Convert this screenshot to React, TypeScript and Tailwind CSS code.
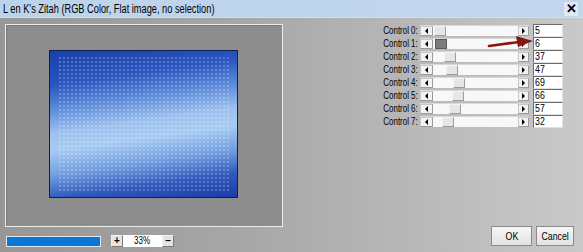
const controls = [5, 6, 37, 47, 69, 66, 57, 32];

function Slider({ value, active }: { value: number; active?: boolean }) {
  const left = Math.round((value / 255) * 73);
  return (
    <div className="flex h-[11px] w-[109px] border-t border-[#d8d8d8] bg-[#f6f6f6]">
      <div className="flex h-full w-[13px] items-center justify-center border border-[#c8c8c8] bg-[#f2f2f2] border-b-[#9a9a9a] border-r-[#9a9a9a]">
        <span className="h-0 w-0 border-y-[3px] border-r-[3px] border-y-transparent border-r-black" />
      </div>
      <div className="relative h-full flex-1 bg-[#f8f8f8]">
        <div
          className={
            active
              ? 'absolute top-0 h-full w-[12px] border border-[#5a5a5a] bg-[#7c7c7c]'
              : 'absolute top-0 h-full w-[12px] border border-[#f4f4f4] border-b-[#9c9c9c] border-r-[#9c9c9c] bg-[#e6e6e6]'
          }
          style={{ left }}
        />
      </div>
      <div className="flex h-full w-[11px] items-center justify-center border border-[#c8c8c8] bg-[#f2f2f2] border-b-[#9a9a9a] border-r-[#9a9a9a]">
        <span className="h-0 w-0 border-y-[3px] border-l-[3px] border-y-transparent border-l-black" />
      </div>
    </div>
  );
}

export default function App() {
  return (
    <div className="relative h-[252px] w-[583px] overflow-hidden bg-[linear-gradient(to_right,#979797,#a6a6a6_40%,#c9c9c9)] font-['Liberation_Sans',sans-serif] text-black">
      {/* title bar */}
      <div className="flex h-[18px] items-center justify-between border-b border-[#d6dde6] bg-[linear-gradient(to_right,#bcd3ec,#c2d7ee)] pl-[3px] pr-[5px]">
        <span className="inline-block origin-left scale-x-[0.77] whitespace-nowrap text-[12px] leading-none">
          L en K's Zitah (RGB Color, Flat image, no selection)
        </span>
        <div className="flex h-[14px] w-[14px] items-center justify-center bg-[#dfe9f4] text-[13px] font-bold leading-none">✕</div>
      </div>

      <div className="flex h-[233px]">
        {/* left: preview and zoom */}
        <div className="ml-[5px] flex w-[278px] flex-col">
          <div className="mt-[6px] h-[203px] border border-[#ececec] bg-[#8d8d8d] pl-[43px] pt-[25px] shadow-[inset_1px_1px_0_#7a7a7a]">
            <div className="relative h-[148px] w-[189px] border border-[#0e1f55] bg-[linear-gradient(172deg,#1b40a8_0%,#2a56c0_20%,#5d8ad8_34%,#9cc1ee_48%,#a8cbf2_58%,#74a0e0_72%,#3159bc_86%,#1b3ca8_100%)]">
              <div className="absolute inset-x-[8px] inset-y-[5px] bg-[radial-gradient(circle,rgba(255,255,255,0.3)_0.6px,transparent_1px)] bg-[length:4px_4px]" />
            </div>
          </div>
          <div className="mt-[8px] flex items-start">
            <div className="ml-[1px] mt-[1px] h-[11px] w-[95px] border border-[#dfe8f0] bg-[#0b77d4]" />
            <div className="ml-[10px] flex h-[12px] items-stretch text-[10px] leading-none">
              <div className="flex w-[12px] items-center justify-center border border-[#f2f2f2] border-b-[#7a7a7a] border-r-[#7a7a7a] bg-[#e4e4e4] font-bold">+</div>
              <div className="flex w-[39px] items-center justify-center bg-white">
                <span className="inline-block scale-x-[0.8]">33%</span>
              </div>
              <div className="flex w-[12px] items-center justify-center border border-[#f2f2f2] border-b-[#7a7a7a] border-r-[#7a7a7a] bg-[#e4e4e4] font-bold">–</div>
            </div>
          </div>
        </div>

        {/* right: controls and buttons */}
        <div className="flex flex-1 flex-col justify-between pb-[5px] pl-[87px]">
          <div className="mt-[6px] flex flex-col">
            {controls.map((v, i) => (
              <div key={i} className="flex h-[13px] items-center">
                <span className="w-[45px] whitespace-nowrap pr-[1px] text-right text-[11px] leading-none">
                  <span className="inline-block origin-right scale-x-[0.72]">Control {i}:</span>
                </span>
                <div className="ml-[5px]">
                  <Slider value={v} active={i === 1} />
                </div>
                <div className="ml-[4px] flex h-[13px] w-[30px] items-center border border-[#6a6a6a] border-b-[#e0e0e0] border-r-[#e0e0e0] bg-white pl-[1px] text-[11px] leading-none">
                  <span className="inline-block origin-left scale-x-[0.8]">{v}</span>
                </div>
              </div>
            ))}
          </div>
          <div className="flex justify-end gap-[4px] pr-[9px] text-[11px]">
            <button className="h-[20px] w-[41px] border border-[#8a8a8a] bg-[linear-gradient(#f6f6f6,#e2e2e2)] leading-none">
              <span className="inline-block scale-x-[0.8]">OK</span>
            </button>
            <button className="h-[20px] w-[38px] border border-[#8a8a8a] bg-[linear-gradient(#f6f6f6,#e2e2e2)] leading-none">
              <span className="inline-block scale-x-[0.8]">Cancel</span>
            </button>
          </div>
        </div>
      </div>

      {/* red pointer arrow */}
      <svg className="absolute left-[486px] top-[33px]" width="50" height="16" viewBox="0 0 50 16">
        <path d="M3 13 L33 9" stroke="#8a1414" strokeWidth="2.6" strokeLinecap="round" />
        <path d="M30 3 L47 8 L32 14 Z" fill="#8a1414" />
      </svg>
    </div>
  );
}
